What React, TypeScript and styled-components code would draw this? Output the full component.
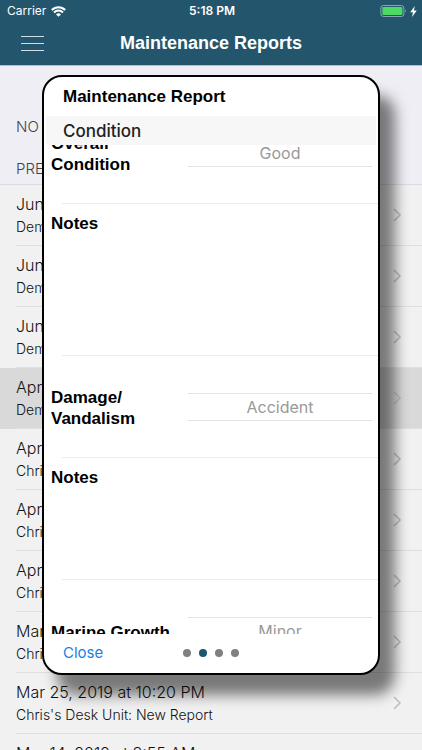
import React, { useLayoutEffect, useRef } from "react";
import styled, { createGlobalStyle } from "styled-components";

const GlobalStyle = createGlobalStyle`
  *, *::before, *::after { box-sizing: border-box; }
  body { margin: 0; font-family: Inter, "Liberation Sans", sans-serif; color: #111; }
  button, select, textarea { font: inherit; color: inherit; background: none; border: 0; margin: 0; padding: 0; border-radius: 0; }
  h1, h2, h3, ul { margin: 0; padding: 0; font-weight: inherit; }
`;

const Page = styled.div`
  position: relative;
  display: flex;
  flex-direction: column;
  height: 100vh;
  overflow: hidden;
  background: #f1f1f1;
`;

const TopBar = styled.header`
  flex: none;
  background: #23566d;
  border-bottom: 1px solid #a9c0cc;
  color: #fff;
`;

const StatusBar = styled.div`
  display: grid;
  grid-template-columns: 1fr auto 1fr;
  align-items: center;
  height: 22px;
  padding: 0 5px 0 7px;
  font-size: 12px;
  line-height: 22px;
`;

const StatusGroup = styled.div<{ $end?: boolean }>`
  display: flex;
  align-items: center;
  justify-content: ${(p) => (p.$end ? "flex-end" : "flex-start")};
  gap: ${(p) => (p.$end ? 3 : 5)}px;
`;

const Time = styled.span`
  font-weight: 600;
`;

const NavBar = styled.div`
  display: grid;
  grid-template-columns: 64px 1fr 64px;
  align-items: center;
  height: 43px;
  padding-bottom: 2px;
`;

const MenuButton = styled.button`
  display: flex;
  align-items: center;
  justify-content: center;
  height: 41px;
`;

const PageTitle = styled.h1`
  text-align: center;
  font-family: "Liberation Sans", sans-serif;
  font-size: 18px;
  line-height: 24px;
  font-weight: 700;
`;

const Sections = styled.div`
  flex: none;
  padding-top: 40px;
  background: #efeef4;
  border-bottom: 1px solid #dcdce0;
`;

const SectionLabel = styled.h2`
  height: 42px;
  padding: 10px 16px 0;
  font-size: 15px;
  line-height: 22px;
  font-weight: 300;
  color: #444;

  &:last-child { height: 36px; }
`;

const ReportList = styled.ul`
  list-style: none;
`;

const ReportItem = styled.li<{ $selected?: boolean }>`
  background: ${(p) => (p.$selected ? "#d9d9d9" : "transparent")};
`;

const ReportLink = styled.a`
  display: flex;
  align-items: center;
  justify-content: space-between;
  height: 61px;
  margin-left: 16px;
  padding-right: 20px;
  border-bottom: 1px solid #dfdfe2;
  color: #111;
  text-decoration: none;
  font-weight: 300;
`;

const ReportDate = styled.div`
  font-size: 16px;
  line-height: 24px;
`;

const ReportUnit = styled.div`
  font-size: 14px;
  line-height: 22px;
`;

const Overlay = styled.div`
  position: absolute;
  inset: 0;
  display: flex;
  padding: 75px 42px 75px 42px;
`;

const Dialog = styled.section`
  flex: 1;
  display: flex;
  flex-direction: column;
  min-width: 0;
  overflow: hidden;
  background: #fff;
  border: 2px solid #000;
  border-radius: 20px;
  box-shadow: 15px 20px 14px rgba(0, 0, 0, 0.5);
`;

const DialogTitle = styled.h2`
  flex: none;
  padding: 0 19px;
  font-family: "Liberation Sans", sans-serif;
  font-size: 17px;
  line-height: 39px;
  font-weight: 700;
  color: #000;
`;

const GroupTitle = styled.h3`
  flex: none;
  height: 29px;
  margin: 0 2px;
  padding: 2px 17px 0;
  background: #f7f7f7;
  font-size: 17px;
  line-height: 27px;
  font-weight: 500;
  color: #222;
`;

const FormScroll = styled.form`
  flex: 1;
  min-height: 0;
  overflow-y: auto;
  scrollbar-width: none;
`;

const Row = styled.div`
  display: grid;
  grid-template-columns: 130px 1fr;
  column-gap: 7px;
  align-items: center;
  height: 102px;
  padding: 0 6px 0 7px;
  background: linear-gradient(#ececec, #ececec) 18px 100% / 100% 1px no-repeat;
`;

const NotesRow = styled.div<{ $tall?: boolean }>`
  display: flex;
  flex-direction: column;
  height: ${(p) => (p.$tall ? 152 : 122)}px;
  padding: 7px 6px 8px 7px;
  background: linear-gradient(#ececec, #ececec) 18px 100% / 100% 1px no-repeat;
`;

const Label = styled.label`
  padding-top: 2px;
  font-family: "Liberation Sans", sans-serif;
  font-size: 17px;
  line-height: 21px;
  font-weight: 700;
  color: #000;
  white-space: pre-line;
`;

const Picker = styled.select`
  appearance: none;
  width: 100%;
  height: 28px;
  border-top: 1px solid #e4e4e4;
  border-bottom: 1px solid #e4e4e4;
  font-size: 16px;
  line-height: 26px;
  color: #999;
  text-align: center;
  text-align-last: center;
`;

const Notes = styled.textarea`
  flex: 1;
  resize: none;
  outline: none;
  font-size: 16px;
`;

const Footer = styled.footer`
  flex: none;
  display: grid;
  grid-template-columns: 1fr auto 1fr;
  align-items: center;
  height: 39px;
  padding: 0 19px 2px;
`;

const CloseButton = styled.button`
  justify-self: start;
  font-size: 15px;
  line-height: 24px;
  color: #1b7fe3;
`;

const Dots = styled.nav`
  display: flex;
  gap: 8px;
`;

const Dot = styled.button<{ $active?: boolean }>`
  width: 8px;
  height: 8px;
  border-radius: 50%;
  background: ${(p) => (p.$active ? "#1f566f" : "#808080")};
`;

const reports = [
  { date: "Jun 12, 2019", unit: "Demo Unit" },
  { date: "Jun 11, 2019", unit: "Demo Unit" },
  { date: "Jun 10, 2019", unit: "Demo Unit" },
  { date: "Apr 24, 2019", unit: "Demo Unit", selected: true },
  { date: "Apr 18, 2019", unit: "Chris's Desk Unit" },
  { date: "Apr 16, 2019", unit: "Chris's Desk Unit" },
  { date: "Apr 10, 2019", unit: "Chris's Desk Unit" },
  { date: "Mar 28, 2019", unit: "Chris's Desk Unit" },
  { date: "Mar 25, 2019 at 10:20 PM", unit: "Chris's Desk Unit: New Report" },
  { date: "Mar 14, 2019 at 8:55 AM", unit: "Chris's Desk Unit: New Report" },
];

const WifiIcon = () => (
  <svg width="15" height="11" viewBox="0 0 15 11" fill="none" aria-hidden="true">
    <path d="M0.8 4 A9.4 9.4 0 0 1 14.2 4" stroke="#fff" strokeWidth="2" />
    <path d="M3 6.5 A6.2 6.2 0 0 1 12 6.5" stroke="#fff" strokeWidth="1.9" />
    <path d="M7.5 10.8 L5 8.4 A3.6 3.6 0 0 1 10 8.4 Z" fill="#fff" />
  </svg>
);

const BatteryIcon = () => (
  <svg width="27" height="12" viewBox="0 0 27 12" fill="none" aria-hidden="true">
    <rect x="0.9" y="0.5" width="23" height="11" rx="2.5" stroke="#8aa6b3" />
    <rect x="2.4" y="2" width="20" height="8" rx="1" fill="#4cd964" />
    <path d="M25.2 4 Q26.8 6 25.2 8 Z" fill="#8aa6b3" />
  </svg>
);

const BoltIcon = () => (
  <svg width="7" height="11" viewBox="0 0 7 11" aria-hidden="true">
    <path d="M4.8 0 L0.2 6.2 H3 L2 11 L6.8 4.4 H3.9 Z" fill="#fff" />
  </svg>
);

const MenuIcon = () => (
  <svg width="23" height="16" viewBox="0 0 23 16" stroke="#d3dfe5" strokeWidth="1" aria-hidden="true">
    <path d="M0 1.5 H23 M0 8.5 H23 M0 15.5 H23" />
  </svg>
);

const ChevronIcon = () => (
  <svg width="9" height="14" viewBox="0 0 9 14" fill="none" aria-hidden="true">
    <path d="M1 1 L7 7 L1 13" stroke="#bfbfc4" strokeWidth="1.6" />
  </svg>
);

function PickerRow({ id, label, value }: { id: string; label: string; value: string }) {
  return (
    <Row>
      <Label htmlFor={id}>{label}</Label>
      <Picker id={id} defaultValue={value}>
        <option>{value}</option>
      </Picker>
    </Row>
  );
}

function NotesField({ id, tall }: { id: string; tall?: boolean }) {
  return (
    <NotesRow $tall={tall}>
      <Label htmlFor={id}>Notes</Label>
      <Notes id={id} />
    </NotesRow>
  );
}

export default function App() {
  const form = useRef<HTMLFormElement>(null);

  useLayoutEffect(() => {
    if (form.current) form.current.scrollTop = 43;
  }, []);

  return (
    <Page>
      <GlobalStyle />
      <TopBar>
        <StatusBar>
          <StatusGroup>
            Carrier <WifiIcon />
          </StatusGroup>
          <Time>5:18 PM</Time>
          <StatusGroup $end>
            <BatteryIcon />
            <BoltIcon />
          </StatusGroup>
        </StatusBar>
        <NavBar>
          <MenuButton aria-label="Menu">
            <MenuIcon />
          </MenuButton>
          <PageTitle>Maintenance Reports</PageTitle>
        </NavBar>
      </TopBar>
      <Sections>
        <SectionLabel>NO REPORTS IN PROGRESS</SectionLabel>
        <SectionLabel>PREVIOUS REPORTS</SectionLabel>
      </Sections>
      <ReportList>
        {reports.map((r) => (
          <ReportItem key={r.date} $selected={r.selected}>
            <ReportLink href="#">
              <div>
                <ReportDate>{r.date}</ReportDate>
                <ReportUnit>{r.unit}</ReportUnit>
              </div>
              <ChevronIcon />
            </ReportLink>
          </ReportItem>
        ))}
      </ReportList>
      <Overlay>
        <Dialog role="dialog" aria-labelledby="dialog-title">
          <DialogTitle id="dialog-title">Maintenance Report</DialogTitle>
          <GroupTitle>Condition</GroupTitle>
          <FormScroll ref={form}>
            <PickerRow id="overall" label={"Overall\nCondition"} value="Good" />
            <NotesField id="overall-notes" tall />
            <PickerRow id="damage" label={"Damage/\nVandalism"} value="Accident" />
            <NotesField id="damage-notes" />
            <PickerRow id="growth" label="Marine Growth" value="Minor" />
          </FormScroll>
          <Footer>
            <CloseButton>Close</CloseButton>
            <Dots aria-label="Report pages">
              {[1, 2, 3, 4].map((n) => (
                <Dot key={n} $active={n === 2} aria-label={`Page ${n}`} />
              ))}
            </Dots>
          </Footer>
        </Dialog>
      </Overlay>
    </Page>
  );
}
